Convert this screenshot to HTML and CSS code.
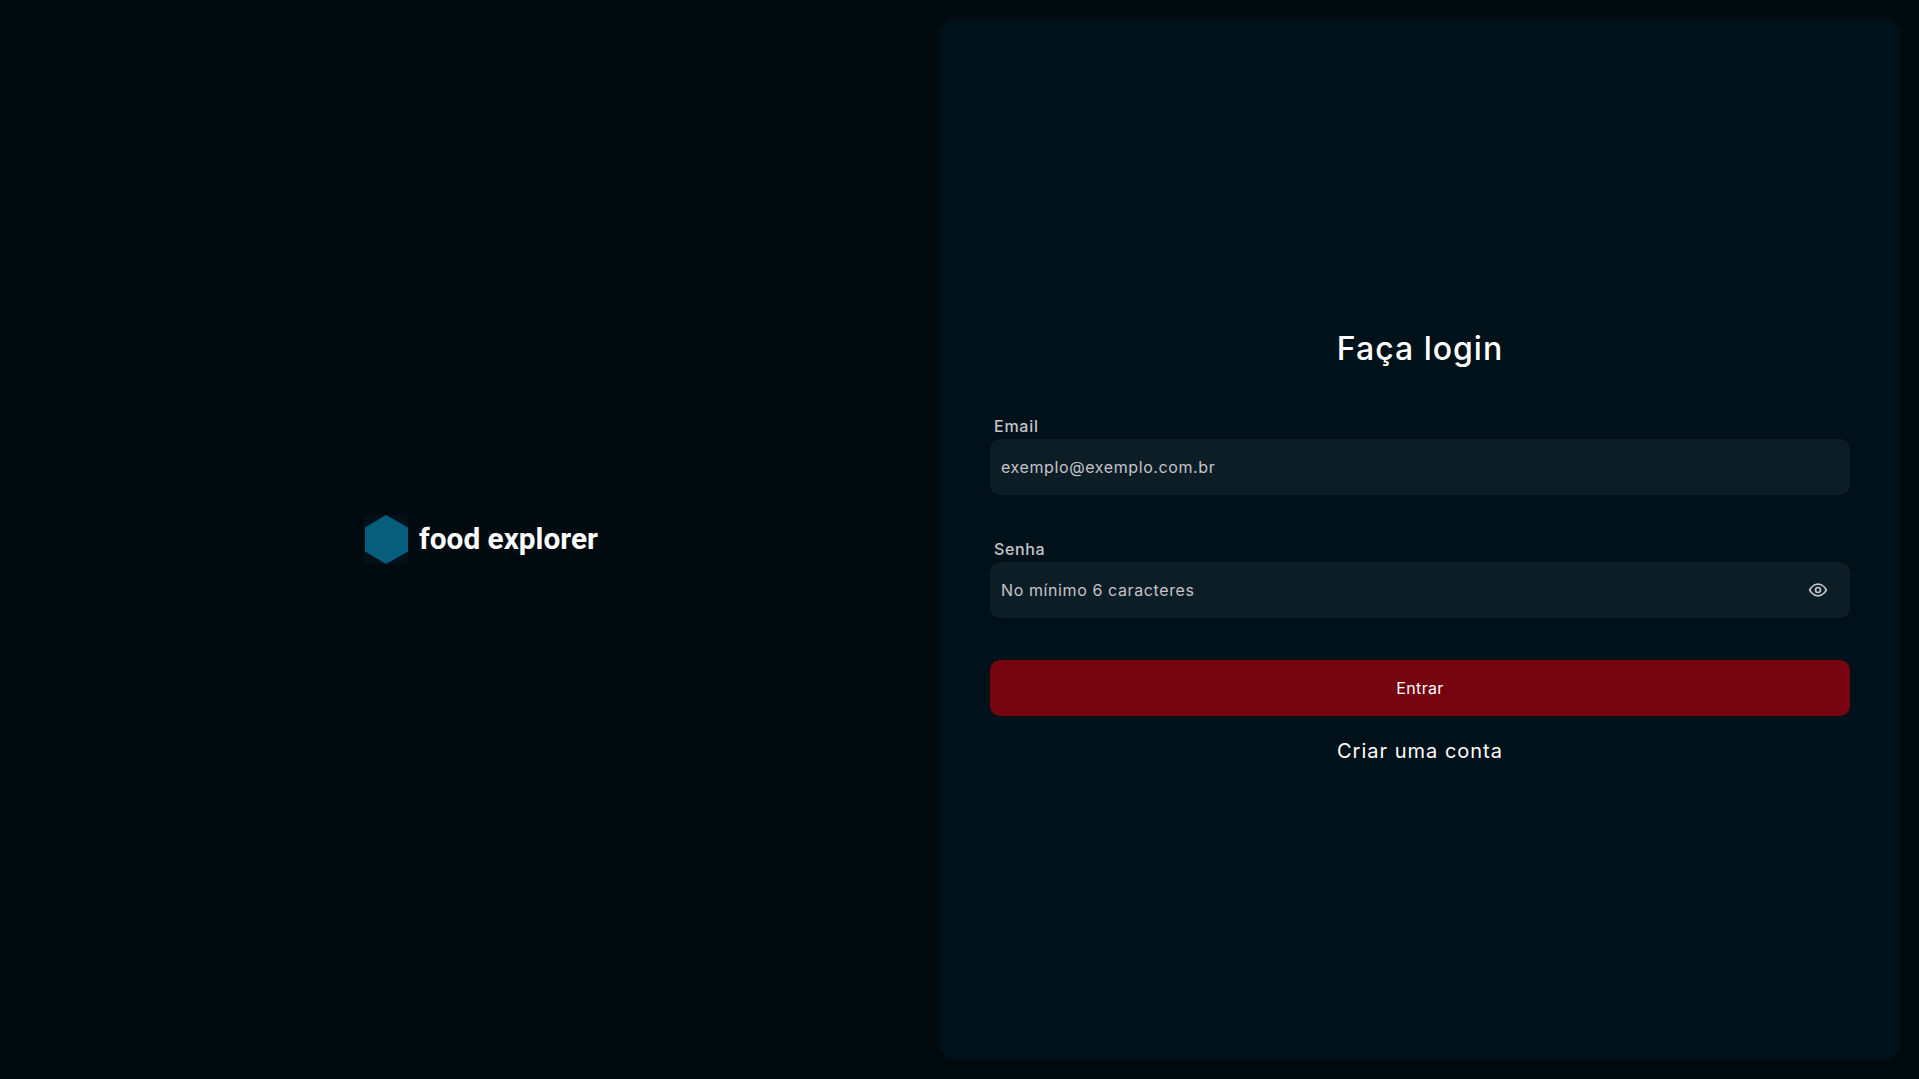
FILE: index.html
```html
<!DOCTYPE html>
<html lang="pt-BR">
<head>
<meta charset="utf-8">
<title>food explorer</title>
<link rel="stylesheet" href="styles.css">
</head>
<body>
<main class="page">
  <section class="brand">
    <svg class="logo" width="44" height="49" viewBox="0 0 44 49"><rect width="44" height="49" fill="#00111a"/><polygon points="22,0 44,12.5 44,36.5 22,49 1,36.5 1,12.5" fill="#065e7c"/></svg>
    <span class="brand-name">food explorer</span>
  </section>
  <section class="panel">
    <form class="form">
      <h1 class="title">Faça login</h1>
      <div class="field">
        <label class="label" for="email">Email</label>
        <div class="control"><input class="input" id="email" placeholder="exemplo@exemplo.com.br"></div>
      </div>
      <div class="field">
        <label class="label label-wide" for="senha">Senha</label>
        <div class="control">
          <input class="input" id="senha" placeholder="No mínimo 6 caracteres">
          <svg class="eye" width="20" height="20" viewBox="0 0 24 24" fill="none" stroke="#c4c4cc" stroke-width="2" stroke-linecap="round" stroke-linejoin="round"><path d="M2 12s3.6-7 10-7 10 7 10 7-3.6 7-10 7-10-7-10-7z"/><circle cx="12" cy="12" r="3"/></svg>
        </div>
      </div>
      <button class="submit" type="button">Entrar</button>
      <a class="link" href="#">Criar uma conta</a>
    </form>
  </section>
</main>
</body>
</html>
```
FILE: styles.css
```css
* { box-sizing: border-box; }
html, body { margin: 0; height: 100%; }
body { background: #000a0f; font-family: "Inter", "Noto Sans", sans-serif; color: #fff; }
.page { display: grid; grid-template-columns: 940px 960px; height: 1079px; padding: 19px 19px 19px 0; }
.brand { display: flex; align-items: center; justify-content: center; gap: 11px; padding-left: 22px; }
.brand-name { font-family: "Roboto", sans-serif; font-weight: 700; font-size: 29.8px; line-height: 49px; margin-bottom: 2px; }
.logo { flex: none; }
.panel { background: #00111a; border-radius: 16px; padding: 12px 50px 0; display: flex; align-items: center; }
.form { width: 100%; display: flex; flex-direction: column; }
.title { margin: 0 0 41px; font-size: 32px; line-height: 48px; font-weight: 500; text-align: center; letter-spacing: 1px; }
.field { display: flex; flex-direction: column; margin-bottom: 42px; }
.label { font-size: 16px; line-height: 24px; padding-left: 4px; font-weight: 500; color: #c4c4cc; margin-bottom: 1px; letter-spacing: 0.75px; }
.label-wide { letter-spacing: 0.6px; }
.control { position: relative; height: 56px; background: #0d1d25; border-radius: 10px; display: flex; align-items: center; }
.input { flex: 1; height: 100%; background: none; border: 0; outline: 0; padding: 0 11px; font: 400 16px "Inter", sans-serif; color: #fff; letter-spacing: 0.6px; }
.input::placeholder { color: #c4c4cc; opacity: 1; }
.eye { position: absolute; right: 22px; top: 18px; }
.submit { height: 56px; background: #750310; color: #fff; border: 0; border-radius: 10px; font: 400 16px "Inter", sans-serif; letter-spacing: 0.35px; }
.link { margin-top: 19px; text-align: center; font-size: 20px; line-height: 32px; color: #fff; text-decoration: none; letter-spacing: 1px; }
```
